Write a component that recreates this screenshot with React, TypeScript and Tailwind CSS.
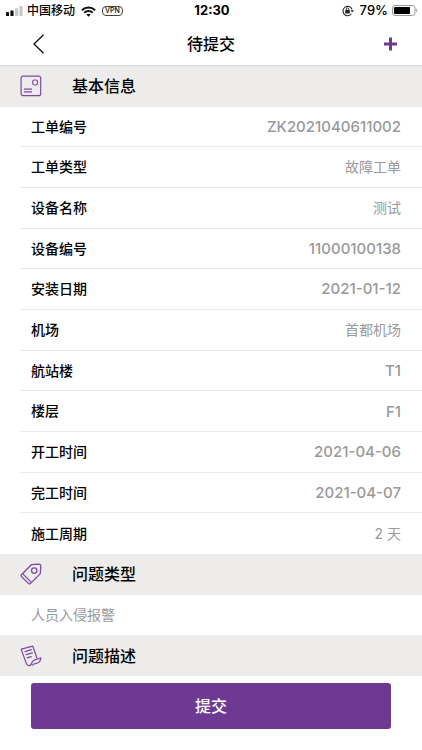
import React from 'react';
import clsx from 'clsx';

// ─── Data ───────────────────────────────────────────────────────

const basicInfo = [
  { label: '工单编号', value: 'ZK2021040611002', numeric: true },
  { label: '工单类型', value: '故障工单' },
  { label: '设备名称', value: '测试' },
  { label: '设备编号', value: '11000100138', numeric: true },
  { label: '安装日期', value: '2021-01-12', numeric: true },
  { label: '机场', value: '首都机场' },
  { label: '航站楼', value: 'T1', numeric: true },
  { label: '楼层', value: 'F1', numeric: true },
  { label: '开工时间', value: '2021-04-06', numeric: true },
  { label: '完工时间', value: '2021-04-07', numeric: true },
  { label: '施工周期', value: '2 天' },
];

// ─── Icons ──────────────────────────────────────────────────────

function SignalIcon() {
  return (
    <svg width="17" height="10" viewBox="0 0 17 10" aria-hidden="true">
      <rect x="0" y="6" width="3" height="4" rx="0.6" fill="#111" />
      <rect x="4.4" y="4.5" width="3.2" height="5.5" rx="0.6" fill="#111" />
      <rect x="9" y="2.2" width="3.2" height="7.8" rx="0.6" fill="#c8c8c8" />
      <rect x="13.4" y="0" width="3.2" height="10" rx="0.6" fill="#c8c8c8" />
    </svg>
  );
}

function WifiIcon() {
  return (
    <svg width="15" height="11" viewBox="0 0 15 11" fill="none" stroke="#111" strokeWidth="2" aria-hidden="true">
      <path d="M0.9 4.2C4.6 0.5 10.4 0.5 14.1 4.2" />
      <path d="M3.3 6.7C5.6 4.5 9.4 4.5 11.7 6.7" />
      <path d="M7.5 10.7L5.3 8.5C6.5 7.4 8.5 7.4 9.7 8.5Z" fill="#111" stroke="none" />
    </svg>
  );
}

function RotationLockIcon() {
  return (
    <svg width="12" height="12" viewBox="0 0 12 12" fill="none" stroke="#222" aria-hidden="true">
      <path d="M10 4.2A4.7 4.7 0 1 0 9.5 8.8" strokeWidth="1.1" />
      <path d="M8.4 5.3H12L10.2 7.6Z" fill="#222" stroke="none" />
      <rect x="3.2" y="5" width="4.6" height="3.4" rx="0.4" fill="#222" stroke="none" />
      <path d="M4.3 5.3V4.1A1.2 1.2 0 0 1 6.7 4.1V5.3" strokeWidth="0.9" />
    </svg>
  );
}

function BatteryIcon() {
  return (
    <svg width="26" height="11" viewBox="0 0 26 11" aria-hidden="true">
      <rect x="0.5" y="0.5" width="22.5" height="10" rx="2.5" fill="none" stroke="#999" />
      <rect x="2" y="2" width="16" height="7" rx="1" fill="#000" />
      <path d="M24.2 3.6C25.6 4 25.6 7 24.2 7.4Z" fill="#999" />
    </svg>
  );
}

function CardIcon() {
  return (
    <svg width="22" height="22" viewBox="0 0 22 22" fill="none" stroke="#7d4aa3" strokeWidth="1.2" aria-hidden="true">
      <rect x="1.1" y="1.1" width="19.6" height="19.6" rx="2" />
      <rect x="12.7" y="5" width="4.8" height="5" rx="1.8" />
      <path d="M4 14.1H12M4 16.8H12" />
    </svg>
  );
}

function TagIcon() {
  return (
    <svg
      width="22"
      height="22"
      viewBox="0 0 22 22"
      fill="none"
      stroke="#7d4aa3"
      strokeWidth="1.3"
      strokeLinejoin="round"
      aria-hidden="true"
    >
      <path d="M11.4 1.7L18.8 1.1C20.2 1.1 20.9 1.8 20.8 3.1L20.3 10.6L10.6 20.4C9.9 21.1 9.1 21.1 8.4 20.4L1.6 13.7C0.9 13 0.9 12.2 1.6 11.5Z" />
      <path d="M2.6 10.6L11.3 19.4" />
      <circle cx="14.2" cy="7.6" r="2.7" />
    </svg>
  );
}

function ScrollIcon() {
  return (
    <svg
      width="22"
      height="22"
      viewBox="0 0 22 22"
      fill="none"
      stroke="#7d4aa3"
      strokeWidth="1.2"
      strokeLinecap="round"
      strokeLinejoin="round"
      aria-hidden="true"
    >
      <path d="M9.3 20.6C7.2 20.6 6.6 19.4 6 17.6L1.2 4.2L12.8 1.2L16.9 12.8" />
      <path d="M9.3 20.6C11 20.4 11.6 19.2 11.8 17.8C12 16.3 12.8 15.8 14.2 15.2C16.2 14.2 18.6 14 20.8 12.8C20.8 15.2 19.8 17 17.6 18C15.4 19 13.6 18.2 12.4 20.2" />
      <path d="M5 6.6L11.4 4.7M6 9.7L12.4 7.8M7.2 12.9L11.2 11.6" />
    </svg>
  );
}

// ─── Building blocks ────────────────────────────────────────────

function SectionHeader({ icon, title }: { icon: React.ReactNode; title: string }) {
  return (
    <div className="flex grow basis-10 items-center bg-[#eeecea] pl-5">
      <span className="w-[52px]">{icon}</span>
      <h2 className="text-base font-medium">{title}</h2>
    </div>
  );
}

interface InfoRowProps {
  label: string;
  value: string;
  numeric?: boolean;
}

function InfoRow({ label, value, numeric }: InfoRowProps) {
  return (
    <div className="ml-5 flex grow basis-10 items-center justify-between border-b border-[#e9e9e9] pr-[21px] pl-[11px] text-sm last:border-b-0">
      <dt className="font-medium">{label}</dt>
      <dd className={clsx('text-[#999]', numeric && 'text-[15px] font-medium')}>{value}</dd>
    </div>
  );
}

function StatusBar() {
  return (
    <div className="grid h-[22px] grid-cols-[1fr_auto_1fr] items-center pr-1 pl-[6px] text-xs">
      <div className="flex items-center gap-1">
        <SignalIcon />
        <span className="font-medium">中国移动</span>
        <span className="ml-0.5">
          <WifiIcon />
        </span>
        <span className="ml-0.5 rounded-sm border border-[#444] px-0.5 text-[7px] leading-[8px] font-medium">VPN</span>
      </div>
      <span className="text-[13px] font-bold">12:30</span>
      <div className="flex items-center justify-end gap-1">
        <RotationLockIcon />
        <span className="ml-0.5 text-[13px] font-medium">79%</span>
        <BatteryIcon />
      </div>
    </div>
  );
}

// ─── Page ───────────────────────────────────────────────────────

export default function App() {
  return (
    <div className="flex min-h-screen flex-col bg-white font-[Inter,'Noto_Sans_CJK_SC',sans-serif] text-black">
      <header className="border-b border-[#d9d9d9]">
        <StatusBar />
        <nav className="grid h-[43px] grid-cols-[1fr_auto_1fr] items-center px-6">
          <button type="button" aria-label="返回" className="justify-self-start px-2">
            <svg width="13" height="20" viewBox="0 0 13 20" fill="none" stroke="#111" strokeWidth="1.3">
              <path d="M11.5 0.7L2 10L11.5 19.3" />
            </svg>
          </button>
          <h1 className="text-base font-medium">待提交</h1>
          <button type="button" aria-label="新增" className="justify-self-end">
            <svg width="15" height="14" viewBox="0 0 15 14" fill="none" stroke="#6e3992" strokeWidth="3">
              <path d="M7.5 0.5V13.5M1 7H14" />
            </svg>
          </button>
        </nav>
      </header>

      <main className="flex grow flex-col">
        <SectionHeader icon={<CardIcon />} title="基本信息" />
        <dl className="contents">
          {basicInfo.map((item) => (
            <InfoRow key={item.label} {...item} />
          ))}
        </dl>

        <SectionHeader icon={<TagIcon />} title="问题类型" />
        <p className="flex grow basis-10 items-center pl-[31px] text-sm text-[#999]">人员入侵报警</p>

        <SectionHeader icon={<ScrollIcon />} title="问题描述" />
      </main>

      <footer className="px-[31px] pt-[7px] pb-[21px]">
        <button type="button" className="h-[46px] w-full rounded-[3px] bg-[#6e3992] text-base font-medium text-white">
          提交
        </button>
      </footer>
    </div>
  );
}
